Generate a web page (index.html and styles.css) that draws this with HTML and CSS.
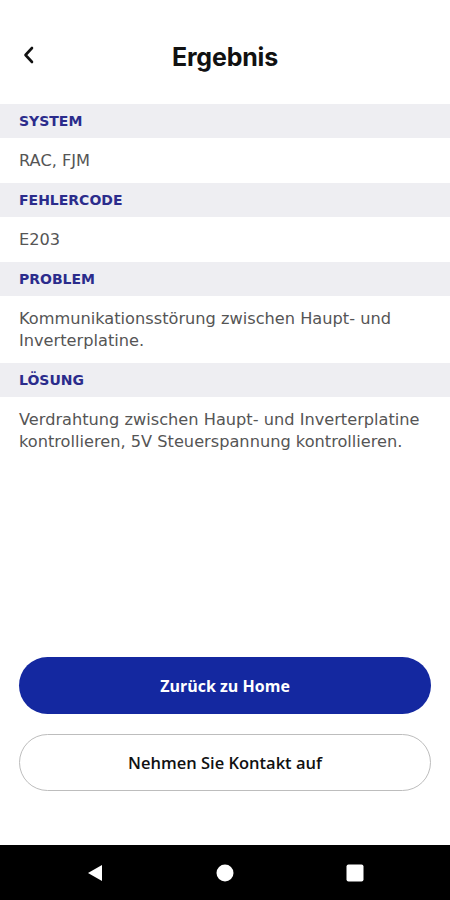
FILE: index.html
```html
<!DOCTYPE html>
<html lang="de">
<head>
  <meta charset="UTF-8" />
  <title>Ergebnis</title>
  <link rel="stylesheet" href="styles.css">
</head>
<body>
  <div class="screen">
    <header class="topbar">
      <button class="back" aria-label="Zurück">
        <svg width="14" height="18" viewBox="0 0 14 18">
          <path d="M10 2 L3.5 9 L10 16" fill="none" stroke="#111" stroke-width="2.6" stroke-linecap="round" stroke-linejoin="round"/>
        </svg>
      </button>
      <h1>Ergebnis</h1>
    </header>

    <div class="result">
      <div class="label">SYSTEM</div>
      <div class="value">RAC, FJM</div>

      <div class="label">FEHLERCODE</div>
      <div class="value">E203</div>

      <div class="label">PROBLEM</div>
      <div class="value">Kommunikationsstörung zwischen Haupt- und Inverterplatine.</div>

      <div class="label">LÖSUNG</div>
      <div class="value">Verdrahtung zwischen Haupt- und Inverterplatine kontrollieren, 5V Steuerspannung kontrollieren.</div>
    </div>

    <div class="actions">
      <button class="btn primary">Zurück zu Home</button>
      <button class="btn outline">Nehmen Sie Kontakt auf</button>
    </div>

    <nav class="navbar">
      <svg width="18" height="18" viewBox="0 0 18 18"><path d="M16 1 L16 17 L2 9 Z" fill="#fff"/></svg>
      <svg width="18" height="18" viewBox="0 0 18 18"><circle cx="9" cy="9" r="8.5" fill="#fff"/></svg>
      <svg width="18" height="18" viewBox="0 0 18 18"><rect x="0.5" y="0.5" width="17" height="17" rx="2" fill="#fff"/></svg>
    </nav>
  </div>
</body>
</html>
```

FILE: styles.css
```css
* {
  box-sizing: border-box;
}
body {
  margin: 0;
  background: white;
  font-family: "DejaVu Sans", "Open Sans", sans-serif;
}
.screen {
  height: 900px;
  display: flex;
  flex-direction: column;
}
.topbar {
  height: 104px;
  padding-top: 35px;
  display: flex;
  align-items: flex-start;
  justify-content: center;
  position: relative;
}
.topbar h1 {
  margin: 0;
  font-family: Inter, sans-serif;
  font-size: 25px;
  font-weight: 700;
  color: #111;
  line-height: 44px;
  letter-spacing: -0.2px;
}
.back {
  position: absolute;
  left: 20px;
  top: 46px;
  background: none;
  border: none;
  padding: 0;
  width: 18px;
  height: 18px;
}
.label {
  background: #eeeef2;
  height: 34px;
  line-height: 34px;
  padding: 0 19px;
  font-size: 14px;
  font-weight: 700;
  color: #2b2c8c;
}
.value {
  padding: 11.5px 19px;
  font-size: 16.2px;
  line-height: 22px;
  color: #555;
}
.actions {
  margin-top: auto;
  padding: 0 19px 54px;
  display: flex;
  flex-direction: column;
  gap: 20px;
}
.btn {
  height: 57px;
  border-radius: 29px;
  font-family: "Open Sans", sans-serif;
  font-size: 16px;
  font-weight: 700;
  cursor: pointer;
}
.primary {
  background: #1428a0;
  color: white;
  border: none;
}
.outline {
  background: white;
  color: #111;
  border: 1px solid #bdbdbd;
  font-weight: 600;
  font-size: 16.5px;
}
.navbar {
  height: 55px;
  background: black;
  display: flex;
  align-items: center;
  justify-content: center;
  gap: 112px;
}
```
